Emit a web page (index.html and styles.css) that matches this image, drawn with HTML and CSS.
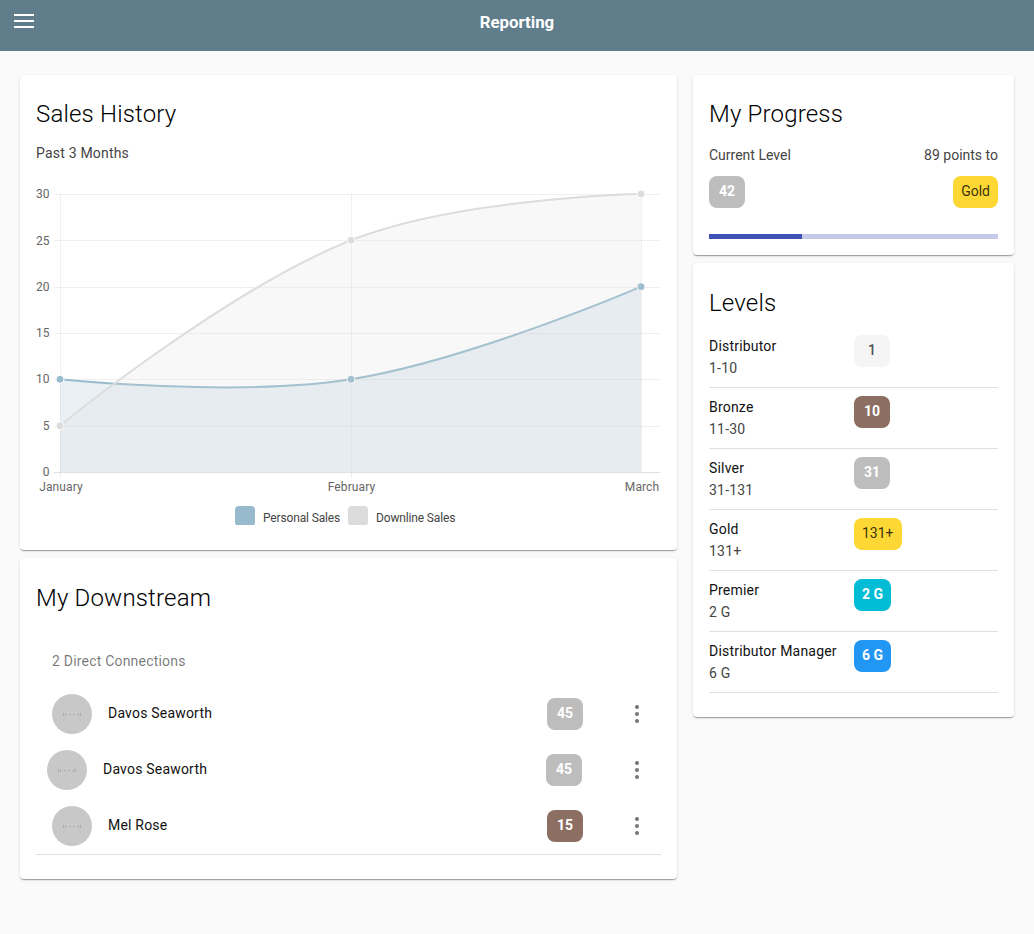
FILE: index.html
```html
<!DOCTYPE html>
<html lang="en">
<head>
  <meta charset="UTF-8">
  <meta name="viewport" content="width=device-width, initial-scale=1.0">
  <title>Reporting</title>
  <link rel="stylesheet" href="styles.css">
</head>
<body>
  <header class="topbar">
    <button class="menu-btn" type="button" aria-label="Menu">
      <span></span><span></span><span></span>
    </button>
    <h1 class="topbar-title">Reporting</h1>
  </header>

  <main class="page">
    <div class="col">
      <section class="card card-sales">
        <h2 class="card-title">Sales History</h2>
        <p class="subtitle">Past 3 Months</p>
        <svg class="chart" width="625" height="345" viewBox="36 180 625 345">
          <!-- grid -->
          <g class="grid">
            <path d="M54 194.500H660M54 240.500H660M54 287.500H660M54 333.500H660M54 379.500H660M54 426.500H660"/>
            <path d="M60.500 194V478M351.500 194V478M641.500 194V472"/>
          </g>
          <path class="axis" d="M54 472.500H660"/>
          <!-- personal sales -->
          <path class="area-personal" d="M60 379.3C60 379.3 237.4 397.4 351 379.3C469.8 360.4 641 286.7 641 286.7V472H60Z"/>
          <path class="line-personal" d="M60 379.3C60 379.3 237.4 397.4 351 379.3C469.8 360.4 641 286.7 641 286.7"/>
          <g class="dots-personal">
            <circle cx="60" cy="379.3" r="4"/><circle cx="351" cy="379.3" r="4"/><circle cx="641" cy="286.7" r="4"/>
          </g>
          <!-- downline sales -->
          <path class="area-down" d="M60 425.7C60 425.7 225.5 290.3 351 240.3C457.9 197.7 641 194 641 194V472H60Z"/>
          <path class="line-down" d="M60 425.7C60 425.7 225.5 290.3 351 240.3C457.9 197.7 641 194 641 194"/>
          <g class="dots-down">
            <circle cx="60" cy="425.7" r="4"/><circle cx="351" cy="240.3" r="4"/><circle cx="641" cy="194" r="4"/>
          </g>
          <!-- labels -->
          <g class="tick-y">
            <text x="49.500" y="198">30</text>
            <text x="49.500" y="245">25</text>
            <text x="49.500" y="291">20</text>
            <text x="49.500" y="337">15</text>
            <text x="49.500" y="383">10</text>
            <text x="49.500" y="430">5</text>
            <text x="49.500" y="476">0</text>
          </g>
          <g class="tick-x">
            <text x="61" y="491">January</text>
            <text x="351.500" y="491">February</text>
            <text x="642" y="491">March</text>
          </g>
          <!-- legend -->
          <rect class="swatch-personal" x="235" y="506" width="20" height="20" rx="4"/>
          <text class="legend-text" x="263" y="522">Personal Sales</text>
          <rect class="swatch-down" x="348" y="506" width="20" height="20" rx="4"/>
          <text class="legend-text" x="376" y="522">Downline Sales</text>
        </svg>
      </section>

      <section class="card card-down">
        <h2 class="card-title">My Downstream</h2>
        <h3 class="list-head">2 Direct Connections</h3>
        <ul class="people">
          <li class="person">
            <span class="avatar"><svg class="avatar-mark" width="18" height="3"><path d="M.5 0V3M2.500 0V3M6 1.500H8M10 1.500H12M15.500 0V3M17.500 0V3"/></svg></span>
            <span class="person-name">Davos Seaworth</span>
            <span class="badge silver">45</span>
            <span class="more"><i></i><i></i><i></i></span>
          </li>
          <li class="person person-moved">
            <span class="avatar"><svg class="avatar-mark" width="18" height="3"><path d="M.5 0V3M2.500 0V3M6 1.500H8M10 1.500H12M15.500 0V3M17.500 0V3"/></svg></span>
            <span class="person-name">Davos Seaworth</span>
            <span class="badge silver">45</span>
            <span class="more"><i></i><i></i><i></i></span>
          </li>
          <li class="person">
            <span class="avatar"><svg class="avatar-mark" width="18" height="3"><path d="M.5 0V3M2.500 0V3M6 1.500H8M10 1.500H12M15.500 0V3M17.500 0V3"/></svg></span>
            <span class="person-name">Mel Rose</span>
            <span class="badge bronze">15</span>
            <span class="more"><i></i><i></i><i></i></span>
          </li>
        </ul>
      </section>
    </div>

    <div class="col">
      <section class="card card-progress">
        <h2 class="card-title">My Progress</h2>
        <div class="progress-row">
          <span>Current Level</span>
          <span>89 points to</span>
        </div>
        <div class="progress-row badges-row">
          <span class="badge silver">42</span>
          <span class="badge gold">Gold</span>
        </div>
        <div class="bar"><div class="bar-fill" style="width: 32.2%"></div></div>
      </section>

      <section class="card card-levels">
        <h2 class="card-title">Levels</h2>
        <ul class="levels">
          <li class="level">
            <div class="level-text"><div class="level-name">Distributor</div><div class="level-range">1-10</div></div>
            <span class="badge plain">1</span>
          </li>
          <li class="level">
            <div class="level-text"><div class="level-name">Bronze</div><div class="level-range">11-30</div></div>
            <span class="badge bronze">10</span>
          </li>
          <li class="level">
            <div class="level-text"><div class="level-name">Silver</div><div class="level-range">31-131</div></div>
            <span class="badge silver">31</span>
          </li>
          <li class="level">
            <div class="level-text"><div class="level-name">Gold</div><div class="level-range">131+</div></div>
            <span class="badge gold">131+</span>
          </li>
          <li class="level">
            <div class="level-text"><div class="level-name">Premier</div><div class="level-range">2 G</div></div>
            <span class="badge cyan">2 G</span>
          </li>
          <li class="level">
            <div class="level-text"><div class="level-name">Distributor Manager</div><div class="level-range">6 G</div></div>
            <span class="badge blue">6 G</span>
          </li>
        </ul>
      </section>
    </div>
  </main>
</body>
</html>
```

FILE: styles.css
```css
* {
  box-sizing: border-box;
}

body {
  margin: 0;
  height: 934px;
  overflow: hidden;
  background-color: #fafafa;
  font-family: Roboto, "Liberation Sans", sans-serif;
  font-size: 14px;
  color: #111;
}

.topbar {
  position: relative;
  height: 51px;
  background-color: #607d8b;
  color: #fff;
}

.topbar-title {
  margin: 0;
  padding-top: 12px;
  text-align: center;
  font-size: 16.8px;
  line-height: 20px;
  font-weight: 700;
}

.menu-btn {
  position: absolute;
  left: 14px;
  top: 14px;
  width: 20px;
  height: 14px;
  padding: 0;
  border: none;
  background: none;
  display: flex;
  flex-direction: column;
  justify-content: space-between;
}

.menu-btn span {
  display: block;
  height: 2px;
  background-color: #fff;
}

.page {
  display: grid;
  grid-template-columns: 657px 321px;
  column-gap: 16px;
  align-items: start;
  padding: 24px 20px 0;
}

.col {
  display: flex;
  flex-direction: column;
  gap: 8px;
}

.card {
  background-color: #fff;
  border-radius: 4px;
  box-shadow: 0 2px 1px -1px rgba(0, 0, 0, 0.2), 0 1px 1px 0 rgba(0, 0, 0, 0.14), 0 1px 3px 0 rgba(0, 0, 0, 0.12);
  padding: 16px;
}

.card-title {
  margin: 0;
  font-size: 24px;
  line-height: 32px;
  font-weight: 300;
  letter-spacing: 0.18px;
  color: #000;
  padding-top: 7px;
}

.card-sales {
  height: 475px;
}

.subtitle {
  margin: 13px 0 0;
  font-size: 14px;
  line-height: 20px;
  color: #444;
  letter-spacing: 0.2px;
}

.chart {
  display: block;
  margin: 17px 0 0;
}

.grid path {
  fill: none;
  stroke: rgba(0, 0, 0, 0.06);
  stroke-width: 1;
}

.axis {
  fill: none;
  stroke: rgba(0, 0, 0, 0.12);
}

.area-down {
  fill: rgba(220, 220, 220, 0.2);
}

.area-personal {
  fill: rgba(151, 187, 205, 0.2);
}

.line-down,
.line-personal {
  fill: none;
  stroke-width: 2;
}

.line-down {
  stroke: #dcdcdc;
}

.line-personal {
  stroke: #97bbcd;
}

.dots-down circle {
  fill: #dcdcdc;
  stroke: #fff;
}

.dots-personal circle {
  fill: #97bbcd;
  stroke: #fff;
}

.tick-y text,
.tick-x text {
  font-size: 12px;
  fill: #666;
}

.tick-y text {
  text-anchor: end;
}

.tick-x text {
  text-anchor: middle;
  letter-spacing: 0.1px;
}

.swatch-personal {
  fill: #97bbcd;
}

.swatch-down {
  fill: #dcdcdc;
}

.legend-text {
  font-size: 12px;
  fill: #444;
  letter-spacing: -0.15px;
}

.card-down {
  height: 321px;
}

.card-down .card-title,
.card-levels .card-title {
  padding-top: 8px;
}

.list-head {
  margin: 37px 0 0;
  padding-left: 16px;
  font-size: 14px;
  line-height: 20px;
  font-weight: 400;
  letter-spacing: 0.2px;
  color: rgba(0, 0, 0, 0.54);
}

.people {
  list-style: none;
  margin: 15px 0 0;
  padding: 0 0 0 16px;
  border-bottom: 1px solid #e0e0e0;
}

.person {
  height: 56px;
  display: flex;
  align-items: center;
}

.person-moved {
  margin-left: -5px;
}

.avatar {
  width: 40px;
  height: 40px;
  border-radius: 50%;
  background-color: #c8c8c8;
  display: flex;
  align-items: center;
  justify-content: center;
}

.avatar-mark path {
  fill: none;
  stroke: #adadad;
}

.person-name {
  margin-left: 16px;
  padding-bottom: 2px;
  flex: 1;
  font-size: 14px;
  letter-spacing: 0.2px;
}

.more {
  width: 4px;
  margin: 0 22px 0 52px;
  display: flex;
  flex-direction: column;
  gap: 3px;
}

.person-moved .more {
  margin-left: 53px;
}

.more i {
  width: 4px;
  height: 4px;
  border-radius: 50%;
  background-color: #757575;
}

.badge {
  display: inline-block;
  min-width: 36px;
  height: 32px;
  padding: 0 8px;
  border-radius: 8px;
  text-align: center;
  font-size: 14px;
  line-height: 31px;
  font-weight: 700;
  color: #fff;
}

.silver {
  background-color: #bdbdbd;
}

.bronze {
  background-color: #8d6e63;
}

.gold {
  background-color: #fdd835;
  color: rgba(0, 0, 0, 0.8);
  font-weight: 400;
}

.plain {
  background-color: #f5f5f5;
  color: rgba(0, 0, 0, 0.7);
  font-weight: 500;
}

.cyan {
  background-color: #00bcd4;
}

.blue {
  background-color: #2196f3;
}

.card-progress {
  height: 180px;
}

.progress-row {
  display: flex;
  justify-content: space-between;
  margin-top: 15px;
  line-height: 20px;
  color: #444;
}

.badges-row {
  margin-top: 11px;
}

.bar {
  height: 5px;
  margin-top: 26px;
  background-color: #c5cae9;
}

.bar-fill {
  height: 100%;
  background-color: #3f51b5;
}

.card-levels {
  height: 454px;
}

.levels {
  list-style: none;
  margin: 8px 0 0;
  padding: 0;
}

.level {
  height: 61px;
  padding-top: 8px;
  display: flex;
  align-items: flex-start;
  border-bottom: 1px solid #e0e0e0;
}

.level-text {
  width: 145px;
}

.level-name {
  font-size: 14px;
  line-height: 22px;
  letter-spacing: 0.2px;
}

.level-range {
  font-size: 14px;
  line-height: 22px;
  color: #444;
  letter-spacing: 0.2px;
}
```
